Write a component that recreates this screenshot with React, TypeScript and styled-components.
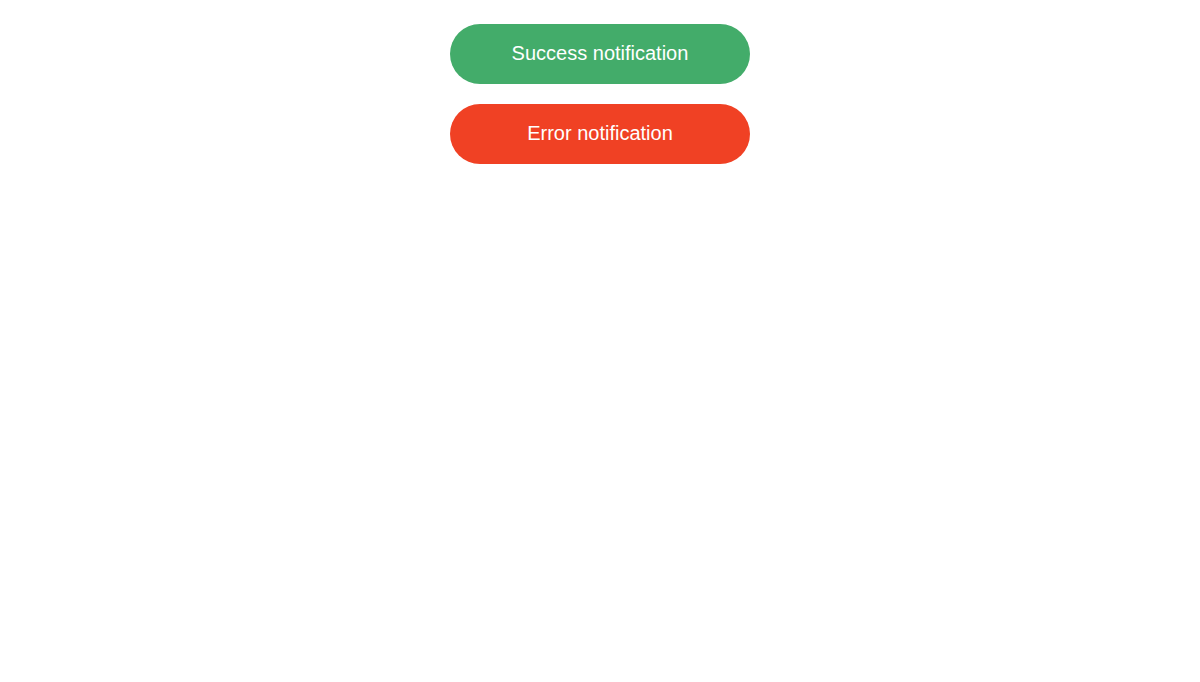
import React from "react";
import styled, { createGlobalStyle } from "styled-components";

const Global = createGlobalStyle`
  html, body { margin: 0; padding: 0; background: #ffffff; }
  body { font-family: "Liberation Sans", Arial, sans-serif; }
`;

const Page = styled.div`
  display: flex;
  flex-direction: column;
  align-items: center;
  gap: 20px;
  padding-top: 24px;
`;

const Button = styled.button<{ $tone: "success" | "error" }>`
  width: 300px;
  height: 60px;
  border: none;
  border-radius: 30px;
  background: ${(p) => (p.$tone === "success" ? "#43ac6a" : "#f04124")};
  color: #ffffff;
  font-family: "Liberation Sans", Arial, sans-serif;
  font-size: 20px;
  cursor: pointer;
  padding: 0 0 2px 0;
`;

export default function App() {
  return (
    <>
      <Global />
      <Page>
        <Button $tone="success">Success notification</Button>
        <Button $tone="error">Error notification</Button>
      </Page>
    </>
  );
}
